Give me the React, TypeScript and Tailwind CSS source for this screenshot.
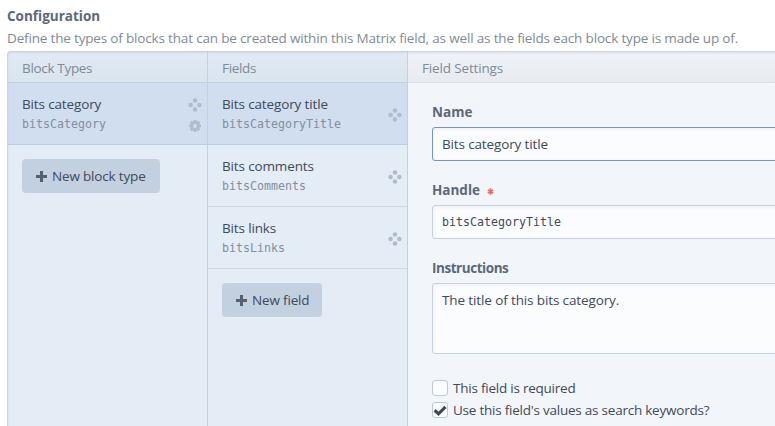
import type { ReactNode } from "react";

function MoveIcon() {
  return (
    <svg width="14" height="14" viewBox="0 0 14 14" fill="#aebccd" className="block">
      <circle cx="7" cy="2.6" r="2.25" />
      <circle cx="2.6" cy="7" r="2.25" />
      <circle cx="11.4" cy="7" r="2.25" />
      <circle cx="7" cy="11.4" r="2.25" />
    </svg>
  );
}

function GearIcon() {
  return (
    <svg width="14" height="14" viewBox="0 0 14 14" className="block">
      <g stroke="#aebccd" strokeWidth="2.7">
        <path d="M7 1v12M1 7h12M2.7 2.7l8.6 8.6M11.3 2.7l-8.6 8.6" />
      </g>
      <circle cx="7" cy="7" r="4.9" fill="#aebccd" />
      <circle cx="7" cy="7" r="1.9" fill="#d1deef" />
    </svg>
  );
}

function Header({ children, light }: { children: ReactNode; light?: boolean }) {
  return (
    <div
      className={
        "h-8 shrink-0 border-b pl-3.5 pt-px text-[13.5px] leading-[33px] text-[#7e8a98] " +
        (light
          ? "tracking-[-0.15px] border-[#dde2ea] bg-linear-to-b from-[#f0f4fa] to-[#e7ebf0]"
          : "tracking-[-0.33px] border-[#c0cee2] bg-linear-to-b from-[#e2ebf5] to-[#d9e4ed]")
      }
    >
      {children}
    </div>
  );
}

function Item({ name, handle, selected, gear }: { name: string; handle: string; selected?: boolean; gear?: boolean }) {
  return (
    <div
      className={
        "flex h-[62px] items-center justify-between border-b pl-3.5 pr-[5px] " +
        (selected ? "border-[#bccbe2] bg-[#d1deef]" : "border-[#cdd7e5]")
      }
    >
      <div className="whitespace-nowrap pt-px">
        <div className="text-[13.5px] leading-5 tracking-[-0.14px] text-[#3f4a5a]">{name}</div>
        <div className="font-['DejaVu_Sans_Mono',monospace] text-[11.63px] leading-5 text-[#838f9e]">{handle}</div>
      </div>
      <div className={"flex flex-col gap-[7px] " + (gear ? "pt-1" : "pt-0.5")}>
        <MoveIcon />
        {gear && <GearIcon />}
      </div>
    </div>
  );
}

function AddButton({ children, width }: { children: ReactNode; width: string }) {
  return (
    <button
      className={
        "ml-3.5 mt-3.5 flex h-[34px] items-center gap-[5px] whitespace-nowrap rounded-[4px] bg-[#c3d0e0] pl-3.5 text-[13.5px] tracking-[-0.17px] text-[#3f4a5a] " + width
      }
    >
      <svg width="11" height="11" viewBox="0 0 11 11" fill="#56616f" className="shrink-0">
        <path d="M4 0h3v4h4v3H7v4H4V7H0V4h4z" />
      </svg>
      <span>{children}</span>
    </button>
  );
}

const input =
  "w-[360px] rounded-[3px] border bg-[#fbfcfe] px-[9px] shadow-[inset_0_1px_4px_rgba(0,0,20,0.06)] whitespace-nowrap ";

function Checkbox({ checked, children }: { checked?: boolean; children: ReactNode }) {
  return (
    <div className="flex h-[22px] items-center gap-[5px] text-[13.5px] tracking-[-0.23px] text-[#3f4a5a]">
      <span className="flex size-4 items-center justify-center rounded-[3px] border border-[#b9c8dc] bg-[#fbfcfe]">
        {checked && (
          <svg width="14" height="14" viewBox="0 0 14 14" fill="none" stroke="#404a57" strokeWidth="3.2" className="shrink-0">
            <path d="M1.6 7.2l3.9 3.6 7-7" />
          </svg>
        )}
      </span>
      <span className="whitespace-nowrap">{children}</span>
    </div>
  );
}

export default function App() {
  return (
    <div className="h-[426px] w-[775px] overflow-hidden bg-white pl-[7px] pt-[5px] font-['Open_Sans','Noto_Sans',sans-serif] text-[13.5px]">
      <div className="h-[22px] text-[13.5px] font-bold leading-[22px] text-[#5c6878]">Configuration</div>
      <div className="h-6 whitespace-nowrap text-[13.5px] leading-[22px] tracking-[-0.17px] text-[#7f8a98]">
        Define the types of blocks that can be created within this Matrix field, as well as the fields each block type is made up of.
      </div>
      <div className="relative flex h-[400px] w-[800px] overflow-hidden rounded-[4px] bg-[#f2f6fb]">
        <div className="flex w-[201px] shrink-0 flex-col border-r border-[#c5d1e2] bg-[#e4ecf6] pl-px">
          <Header>Block Types</Header>
          <Item name="Bits category" handle="bitsCategory" selected gear />
          <AddButton width="w-[138px]">New block type</AddButton>
        </div>
        <div className="flex w-[200px] shrink-0 flex-col border-r border-[#c5d1e2] bg-[#e4ecf6]">
          <Header>Fields</Header>
          <Item name="Bits category title" handle="bitsCategoryTitle" selected />
          <Item name="Bits comments" handle="bitsComments" />
          <Item name="Bits links" handle="bitsLinks" />
          <AddButton width="w-[100px]">New field</AddButton>
        </div>
        <div className="flex flex-1 flex-col">
          <Header light>Field Settings</Header>
          <div className="pl-6 pt-[19px]">
            <div className="h-[25px] font-bold leading-5 text-[#5c6878]">Name</div>
            <div className={input + "h-[34px] border-[#7a93b8] leading-8 tracking-[-0.14px] text-[#3f4a5a]"}>Bits category title</div>
            <div className="mt-[19px] flex h-[25px] gap-[7px] font-bold leading-5 text-[#5c6878]">
              Handle
              <svg width="7" height="7" viewBox="0 0 7 7" className="mt-[8px]" stroke="#f2686f" strokeWidth="1.8">
                <path d="M3.5 .3v6.4M.8 1.9l5.4 3.2M6.2 1.9L.8 5.1" />
              </svg>
            </div>
            <div className={input + "h-[34px] border-[#c6d2e3] font-['DejaVu_Sans_Mono',monospace] text-[11.63px] leading-8 text-[#3f4a5a]"}>bitsCategoryTitle</div>
            <div className="mt-[19px] h-[25px] font-bold leading-5 tracking-[-0.45px] text-[#5c6878]">Instructions</div>
            <div className={input + "h-[71px] border-[#c6d2e3] pt-[6px] leading-5 tracking-[-0.12px] text-[#3f4a5a]"}>The title of this bits category.</div>
            <div className="mt-[23px]">
              <Checkbox>This field is required</Checkbox>
              <Checkbox checked>Use this field's values as search keywords?</Checkbox>
            </div>
          </div>
        </div>
        <div className="pointer-events-none absolute inset-0 rounded-[4px] shadow-[inset_0_1px_3px_#b9c7da,inset_1px_0_0_#d3deea]" />
      </div>
    </div>
  );
}
